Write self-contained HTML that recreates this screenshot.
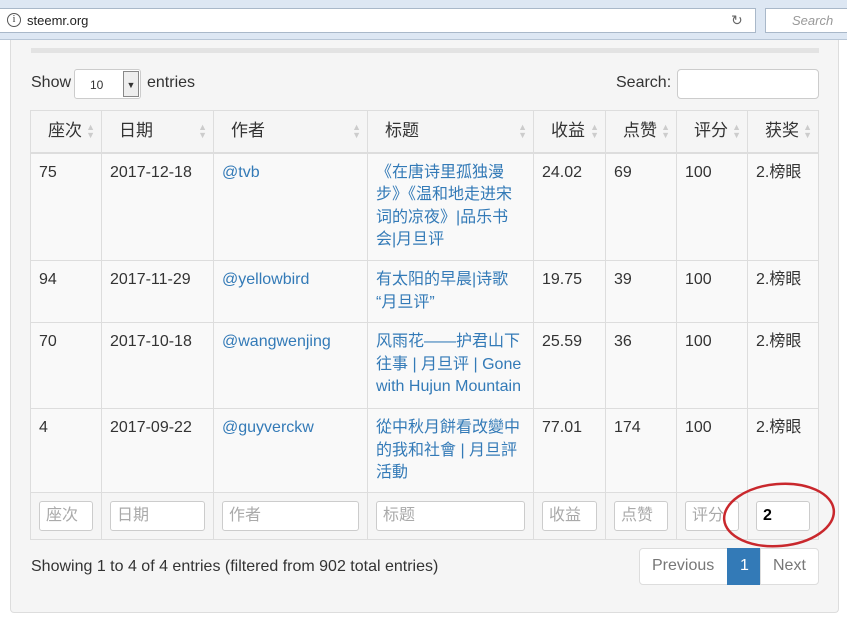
<!DOCTYPE html>
<html><head><meta charset="utf-8"><style>
*{box-sizing:border-box}
body{margin:0;width:847px;height:624px;background:#fff;font-family:"Liberation Sans","Noto Sans CJK SC",sans-serif;font-size:16px;color:#333;overflow:hidden;position:relative}
.top{position:absolute;left:0;top:0;width:847px;height:40px;background:#dde7f3;border-bottom:1px solid #b8c6d6}
.addr{position:absolute;left:-2px;top:8px;width:758px;height:25px;background:#fff;border:1px solid #a9b8c9}
.addr span{position:absolute;left:28px;top:4px;font-size:13px;color:#222}
.info{position:absolute;left:8px;top:4px;width:14px;height:14px;border:1px solid #555;border-radius:50%;font-size:10px;text-align:center;line-height:12px;font-family:"Liberation Serif",serif}
.rel{position:absolute;left:732px;top:3px;font-size:14px;color:#666}
.srch{position:absolute;left:765px;top:8px;width:90px;height:25px;background:#fff;border:1px solid #a9b8c9;font-size:13px;color:#999;font-style:italic;padding:4px 0 0 26px}
.panel{position:absolute;left:10px;top:40px;width:829px;height:573px;background:#f5f5f5;border:1px solid #ddd;border-top:none;border-radius:0 0 4px 4px}
.bar{position:absolute;left:31px;top:48px;width:788px;height:5px;background:#e3e3e3}
.lbl{position:absolute;font-size:16px;color:#333}
.sel{position:absolute;left:74px;top:69px;width:67px;height:30px;background:#fff;border:1px solid #ccc;border-radius:3px;font-size:12px;padding:8px 0 0 15px}
.sel i{position:absolute;right:1px;top:1px;width:16px;height:26px;border:1px solid #888;background:#eee;font-style:normal;font-size:9px;text-align:center;line-height:26px}
.sbox{position:absolute;left:677px;top:69px;width:142px;height:30px;background:#fff;border:1px solid #ccc;border-radius:4px}
table{position:absolute;left:30px;top:110px;border-collapse:collapse;table-layout:fixed;width:788px}
td,th{border:1px solid #ddd;vertical-align:top;padding:8px 8px 0 8px;line-height:22.5px;font-weight:normal;text-align:left;background:#f9f9f9}
th{background:#f5f5f5;height:42px;padding-top:9px;padding-left:17px;position:relative;font-size:17px}
th b{position:absolute;right:6px;top:12px;font-size:9px;line-height:8px;color:#ccc;font-weight:normal}
thead tr{border-bottom:2px solid #ddd}
a{color:#337ab7;text-decoration:none}
.ft td{background:#f5f5f5;padding:8px 8px;height:47px}
.in{background:#fff;border:1px solid #ccc;border-radius:3px;height:30px;color:#aaa;padding:4px 6px;font-size:16px;line-height:20px}
.pg{position:absolute;top:548px;height:37px;border:1px solid #ddd;background:#fff;color:#777;padding:8px 12px;font-size:16px}
</style></head><body>
<div class="top"><div class="addr"><div class="info">i</div><span>steemr.org</span><div class="rel">↻</div></div><div class="srch">Search</div></div>
<div class="panel"></div>
<div class="bar"></div>
<div class="lbl" style="left:31px;top:74px">Show</div>
<div class="sel">10<i>▼</i></div>
<div class="lbl" style="left:147px;top:74px">entries</div>
<div class="lbl" style="left:616px;top:74px">Search:</div>
<div class="sbox"></div>
<table>
<colgroup><col style="width:71px"><col style="width:112px"><col style="width:154px"><col style="width:166px"><col style="width:72px"><col style="width:71px"><col style="width:71px"><col style="width:71px"></colgroup>
<thead><tr><th>座次<b>▲<br>▼</b></th><th>日期<b>▲<br>▼</b></th><th>作者<b>▲<br>▼</b></th><th>标题<b>▲<br>▼</b></th><th>收益<b>▲<br>▼</b></th><th>点赞<b>▲<br>▼</b></th><th>评分<b>▲<br>▼</b></th><th>获奖<b>▲<br>▼</b></th></tr></thead>
<tbody>
<tr style="height:108px"><td>75</td><td>2017-12-18</td><td><a>@tvb</a></td><td><a>《在唐诗里孤独漫步》《温和地走进宋词的凉夜》|品乐书会|月旦评</a></td><td>24.02</td><td>69</td><td>100</td><td>2.榜眼</td></tr>
<tr style="height:62px"><td>94</td><td>2017-11-29</td><td><a>@yellowbird</a></td><td><a>有太阳的早晨|诗歌 “月旦评”</a></td><td>19.75</td><td>39</td><td>100</td><td>2.榜眼</td></tr>
<tr style="height:86px"><td>70</td><td>2017-10-18</td><td><a>@wangwenjing</a></td><td><a>风雨花——护君山下往事 | 月旦评 | Gone with Hujun Mountain</a></td><td>25.59</td><td>36</td><td>100</td><td>2.榜眼</td></tr>
<tr style="height:84px"><td>4</td><td>2017-09-22</td><td><a>@guyverckw</a></td><td><a>從中秋月餅看改變中的我和社會 | 月旦評活動</a></td><td>77.01</td><td>174</td><td>100</td><td>2.榜眼</td></tr>
<tr class="ft"><td><div class="in">座次</div></td><td><div class="in">日期</div></td><td><div class="in">作者</div></td><td><div class="in">标题</div></td><td><div class="in">收益</div></td><td><div class="in">点赞</div></td><td><div class="in">评分</div></td><td><div class="in" style="color:#000;font-weight:bold">2</div></td></tr>
</tbody></table>
<svg style="position:absolute;left:720px;top:480px" width="118" height="70"><ellipse cx="59" cy="35" rx="55" ry="31" fill="none" stroke="#c9282d" stroke-width="2.5" transform="rotate(-5 59 35)"/></svg>
<div class="lbl" style="left:31px;top:558px">Showing 1 to 4 of 4 entries (filtered from 902 total entries)</div>
<div class="pg" style="left:639px;width:89px;border-radius:4px 0 0 4px">Previous</div>
<div class="pg" style="left:727px;width:34px;background:#337ab7;border-color:#337ab7;color:#fff">1</div>
<div class="pg" style="left:760px;width:59px;border-radius:0 4px 4px 0">Next</div>
</body></html>
